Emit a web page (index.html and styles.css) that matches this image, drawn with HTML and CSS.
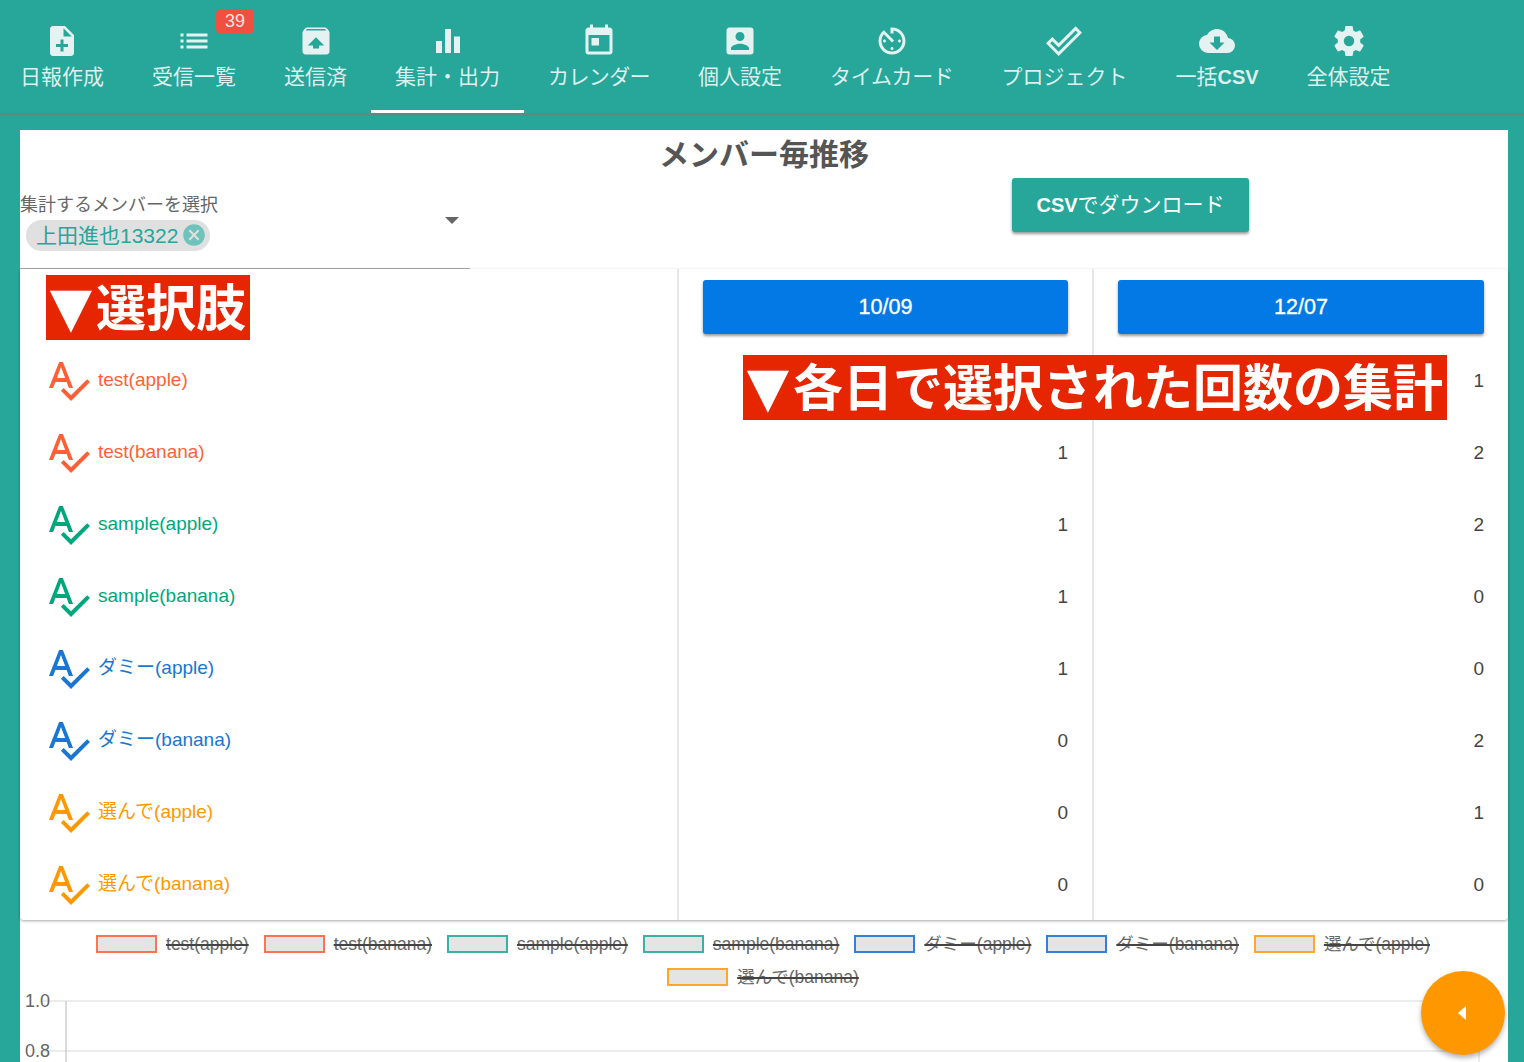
FILE: index.html
```html
<!DOCTYPE html>
<html lang="ja">
<head>
    <meta charset="UTF-8">
    <meta name="viewport" content="width=device-width, initial-scale=1.0">
    <title>メンバー毎推移</title>
    <link rel="stylesheet" href="styles.css">
</head>
<body>
    <svg class="defs" aria-hidden="true">
        <symbol id="spellcheck" viewBox="0 0 24 24"><path d="M21.59,11.59L13.5,19.68L9.83,16L8.42,17.41L13.5,22.5L23,13M6.43,11L8.5,5.5L10.57,11M12.45,16H14.54L9.43,3H7.57L2.46,16H4.55L5.67,13H11.31L12.45,16Z"/></symbol>
    </svg>

    <nav class="tabs">
        <a class="tab"><svg class="tab-icon" viewBox="0 0 24 24"><path d="M14 2H6c-1.1 0-1.99.9-1.99 2L4 20c0 1.1.89 2 1.99 2H18c1.1 0 2-.9 2-2V8l-6-6zm2 14h-3v3h-2v-3H8v-2h3v-3h2v3h3v2zm-3-7V3.5L18.5 9H13z"/></svg><span>日報作成</span></a>
        <a class="tab"><svg class="tab-icon" viewBox="0 0 24 24"><path d="M3 13h2v-2H3v2zm0 4h2v-2H3v2zm0-8h2V7H3v2zm4 4h14v-2H7v2zm0 4h14v-2H7v2zM7 7v2h14V7H7z"/></svg><span>受信一覧</span><em class="badge">39</em></a>
        <a class="tab"><svg class="tab-icon" viewBox="0 0 24 24"><path d="M20.55 5.22l-1.39-1.68C18.88 3.21 18.47 3 18 3H6c-.47 0-.88.21-1.15.55L3.46 5.22C3.17 5.57 3 6.01 3 6.5V19c0 1.1.89 2 2 2h14c1.1 0 2-.9 2-2V6.5c0-.49-.17-.93-.45-1.28zM12 9.5l5.5 5.5H14v2h-4v-2H6.5L12 9.5zM5.12 5l.82-1h12l.93 1H5.12z"/></svg><span>送信済</span></a>
        <a class="tab tab-active"><svg class="tab-icon" viewBox="0 0 24 24"><path d="M10,20H14V4H10V20M4,20H8V12H4V20M16,9V20H20V9H16Z"/></svg><span>集計・出力</span></a>
        <a class="tab tab-tight"><svg class="tab-icon" viewBox="0 0 24 24"><path fill-rule="evenodd" d="M19,3H18V1H16V3H8V1H6V3H5C3.89,3 3,3.9 3,5V19A2,2 0 0,0 5,21H19A2,2 0 0,0 21,19V5C21,3.9 20.1,3 19,3M19,19H5V8H19V19M7,10H12V15H7Z"/></svg><span>カレンダー</span></a>
        <a class="tab"><svg class="tab-icon" viewBox="0 0 24 24"><path fill-rule="evenodd" d="M3,5V19A2,2 0 0,0 5,21H19A2,2 0 0,0 21,19V5A2,2 0 0,0 19,3H5C3.89,3 3,3.9 3,5ZM6,17C6,15 10,13.9 12,13.9C14,13.9 18,15 18,17V18H6ZM15,9A3,3 0 0,1 12,12A3,3 0 0,1 9,9A3,3 0 0,1 12,6A3,3 0 0,1 15,9Z"/></svg><span>個人設定</span></a>
        <a class="tab tab-snug"><svg class="tab-icon" viewBox="0 0 24 24"><path d="M11 17c0 .55.45 1 1 1s1-.45 1-1-.45-1-1-1-1 .45-1 1zm0-14v4h2V5.08c3.39.49 6 3.39 6 6.92 0 3.87-3.13 7-7 7s-7-3.13-7-7c0-1.68.59-3.22 1.58-4.42L12 13l1.41-1.41-6.8-6.8v.02C4.42 6.45 3 9.05 3 12c0 4.97 4.02 9 9 9 4.97 0 9-4.03 9-9s-4.03-9-9-9h-1zm7 9c0-.55-.45-1-1-1s-1 .45-1 1 .45 1 1 1 1-.45 1-1zM6 12c0 .55.45 1 1 1s1-.45 1-1-.45-1-1-1-1 .45-1 1z"/></svg><span>タイムカード</span></a>
        <a class="tab"><svg class="tab-icon" viewBox="0 0 24 24"><path d="M19.78,2.2L24,6.42L8.44,22L0,13.55L4.22,9.33L8.44,13.55L19.78,2.2M19.78,5L8.44,16.36L4.22,12.19L2.81,13.55L8.44,19.17L21.19,6.42L19.78,5Z"/></svg><span>プロジェクト</span></a>
        <a class="tab"><svg class="tab-icon" viewBox="0 0 24 24"><path fill-rule="evenodd" d="M19.35,10.03C18.67,6.59 15.64,4 12,4C9.11,4 6.6,5.64 5.35,8.03C2.34,8.36 0,10.9 0,14A6,6 0 0,0 6,20H19A5,5 0 0,0 24,15C24,12.36 21.95,10.22 19.35,10.03ZM17,13L12,18L7,13H10V9H14V13Z"/></svg><span>一括<b class="latin">CSV</b></span></a>
        <a class="tab"><svg class="tab-icon" viewBox="0 0 24 24"><path d="M12,15.5A3.5,3.5 0 0,1 8.5,12A3.5,3.5 0 0,1 12,8.5A3.5,3.5 0 0,1 15.5,12A3.5,3.5 0 0,1 12,15.5M19.43,12.97C19.47,12.65 19.5,12.33 19.5,12C19.5,11.67 19.47,11.34 19.43,11L21.54,9.37C21.73,9.22 21.78,8.95 21.66,8.73L19.66,5.27C19.54,5.05 19.27,4.96 19.05,5.05L16.56,6.05C16.04,5.66 15.5,5.32 14.87,5.07L14.5,2.42C14.46,2.18 14.25,2 14,2H10C9.75,2 9.54,2.18 9.5,2.42L9.13,5.07C8.5,5.32 7.96,5.66 7.44,6.05L4.95,5.05C4.73,4.96 4.46,5.05 4.34,5.27L2.34,8.73C2.21,8.95 2.27,9.22 2.46,9.37L4.57,11C4.53,11.34 4.5,11.67 4.5,12C4.5,12.33 4.53,12.65 4.57,12.97L2.46,14.63C2.27,14.78 2.21,15.05 2.34,15.27L4.34,18.73C4.46,18.95 4.73,19.03 4.95,18.95L7.44,17.94C7.96,18.34 8.5,18.68 9.13,18.93L9.5,21.58C9.54,21.82 9.75,22 10,22H14C14.25,22 14.46,21.82 14.5,21.58L14.87,18.93C15.5,18.67 16.04,18.34 16.56,17.94L19.05,18.95C19.27,19.03 19.54,18.95 19.66,18.73L21.66,15.27C21.78,15.05 21.73,14.78 21.54,14.63L19.43,12.97Z"/></svg><span>全体設定</span></a>
    </nav>

    <main class="sheet">
        <h1 class="title">メンバー毎推移</h1>

        <div class="filter-row">
            <div class="member-select">
                <label class="member-label">集計するメンバーを選択</label>
                <span class="chip">上田進也13322
                    <svg class="chip-close" viewBox="0 0 24 24"><path d="M12,2C17.53,2 22,6.47 22,12C22,17.53 17.53,22 12,22C6.47,22 2,17.53 2,12C2,6.47 6.47,2 12,2M15.59,7L12,10.59L8.41,7L7,8.41L10.59,12L7,15.59L8.41,17L12,13.41L15.59,17L17,15.59L13.41,12L17,8.41L15.59,7Z"/></svg>
                </span>
                <i class="caret"></i>
            </div>
            <button class="csv-btn"><b class="latin">CSV</b>でダウンロード</button>
        </div>

        <section class="summary">
            <div class="summary-head"></div>
            <div class="summary-head cell-num"><button class="date-btn">10/09</button></div>
            <div class="summary-head cell-num"><button class="date-btn">12/07</button></div>

            <div class="choice c-red"><svg class="choice-icon"><use href="#spellcheck"/></svg>test(apple)</div>
            <div class="cell-num"></div>
            <div class="cell-num">1</div>

            <div class="choice c-red"><svg class="choice-icon"><use href="#spellcheck"/></svg>test(banana)</div>
            <div class="cell-num">1</div>
            <div class="cell-num">2</div>

            <div class="choice c-green"><svg class="choice-icon"><use href="#spellcheck"/></svg>sample(apple)</div>
            <div class="cell-num">1</div>
            <div class="cell-num">2</div>

            <div class="choice c-green"><svg class="choice-icon"><use href="#spellcheck"/></svg>sample(banana)</div>
            <div class="cell-num">1</div>
            <div class="cell-num">0</div>

            <div class="choice c-blue"><svg class="choice-icon"><use href="#spellcheck"/></svg>ダミー(apple)</div>
            <div class="cell-num">1</div>
            <div class="cell-num">0</div>

            <div class="choice c-blue"><svg class="choice-icon"><use href="#spellcheck"/></svg>ダミー(banana)</div>
            <div class="cell-num">0</div>
            <div class="cell-num">2</div>

            <div class="choice c-orange"><svg class="choice-icon"><use href="#spellcheck"/></svg>選んで(apple)</div>
            <div class="cell-num">0</div>
            <div class="cell-num">1</div>

            <div class="choice c-orange"><svg class="choice-icon"><use href="#spellcheck"/></svg>選んで(banana)</div>
            <div class="cell-num">0</div>
            <div class="cell-num">0</div>

            <div class="note note-choices"><span class="note-mark">▼</span>選択肢</div>
            <div class="note note-counts"><span class="note-mark">▼</span>各日で選択された回数の集計</div>
        </section>

        <ul class="legend">
            <li><i class="swatch b-red"></i><s>test(apple)</s></li>
            <li><i class="swatch b-red"></i><s>test(banana)</s></li>
            <li><i class="swatch b-green"></i><s>sample(apple)</s></li>
            <li><i class="swatch b-green"></i><s>sample(banana)</s></li>
            <li><i class="swatch b-blue"></i><s>ダミー(apple)</s></li>
            <li><i class="swatch b-blue"></i><s>ダミー(banana)</s></li>
            <li><i class="swatch b-orange"></i><s>選んで(apple)</s></li>
            <li><i class="swatch b-orange"></i><s>選んで(banana)</s></li>
        </ul>

        <svg class="chart" viewBox="0 0 1488 76">
            <line class="grid" x1="21" y1="15" x2="1460" y2="15"/>
            <line class="grid" x1="21" y1="65" x2="1460" y2="65"/>
            <line class="axis" x1="46" y1="15" x2="46" y2="76"/>
            <line class="grid" x1="1459" y1="15" x2="1459" y2="76"/>
            <text class="tick" x="30" y="21" text-anchor="end">1.0</text>
            <text class="tick" x="30" y="71" text-anchor="end">0.8</text>
        </svg>
    </main>

    <button class="fab" aria-label="開く"><i class="fab-arrow"></i></button>
</body>
</html>
```

FILE: styles.css
```css
html, body {
    height: 100%;
    overflow: hidden;
}
body {
    margin: 0;
    background-color: #27a69a;
    font-family: "Liberation Sans", "Noto Sans CJK JP", sans-serif;
    color: #555;
}
.defs {
    display: none;
}
.latin {
    font-size: 20px;
}

/* top tabs */
.tabs {
    display: flex;
    height: 113px;
    margin-left: -4px;
    border-bottom: 3px solid #5f8a84;
}
.tab {
    position: relative;
    display: flex;
    flex-direction: column;
    align-items: center;
    box-sizing: border-box;
    height: 113px;
    padding: 23px 24px 0;
    color: rgba(255, 255, 255, 0.85);
    font-size: 21px;
    line-height: 36px;
    white-space: nowrap;
}
.tab-icon {
    width: 36px;
    height: 36px;
    fill: #e4f3f1;
}
.tab-active {
    border-bottom: 3px solid #fff;
}
.tab-tight span {
    letter-spacing: -0.6px;
}
.tab-snug span {
    letter-spacing: -0.35px;
}
.badge {
    position: absolute;
    top: 9px;
    right: 6px;
    width: 38px;
    height: 25px;
    border-radius: 5px;
    background-color: #ef5040;
    color: #f5e4e0;
    font-size: 18px;
    font-style: normal;
    line-height: 25px;
    text-align: center;
}

/* main sheet */
.sheet {
    margin: 14px 16px 0 20px;
    background-color: #fff;
}
.title {
    margin: 0;
    height: 48px;
    color: #555;
    font-size: 30px;
    line-height: 50px;
    text-align: center;
}
.filter-row {
    display: flex;
    align-items: flex-start;
    height: 91px;
}
.member-select {
    position: relative;
    box-sizing: border-box;
    width: 450px;
    height: 91px;
    padding-top: 14px;
    border-bottom: 1px solid #a8a8a8;
}
.member-label {
    display: block;
    color: #666;
    font-size: 18px;
    line-height: 26px;
}
.chip {
    display: inline-flex;
    align-items: center;
    height: 31px;
    margin: 2px 0 0 6px;
    padding: 0 3px 0 10px;
    border-radius: 16px;
    background-color: #e0e0e0;
    color: #27a69a;
    font-size: 21px;
    line-height: 28px;
    white-space: nowrap;
}
.chip-close {
    width: 26px;
    height: 26px;
    margin: -2px 0 0 3px;
    fill: #6fc3ba;
}
.caret {
    position: absolute;
    top: 39px;
    left: 425px;
    border-top: 7px solid #666;
    border-left: 7px solid transparent;
    border-right: 7px solid transparent;
}
.csv-btn {
    width: 237px;
    height: 54px;
    margin-left: 542px;
    border: 0;
    border-radius: 3px;
    background-color: #27a69a;
    color: #fff;
    font: inherit;
    font-size: 21px;
    line-height: 28px;
    box-shadow: 0 2px 3px rgba(0, 0, 0, 0.4);
}

/* table of choices */
.summary {
    position: relative;
    display: grid;
    grid-template-columns: 657px 415px 416px;
    grid-template-rows: 75px repeat(8, 72px);
    border-radius: 4px;
    box-shadow: 0 1px 3px rgba(0, 0, 0, 0.35);
}
.summary-head {
    padding-top: 11px;
}
.cell-num {
    box-sizing: border-box;
    border-left: 2px solid #e6e6e6;
    padding: 1px 24px 0;
    color: #444;
    font-size: 19px;
    line-height: 72px;
    text-align: right;
}
.summary-head.cell-num {
    padding-top: 11px;
    line-height: normal;
}
.date-btn {
    display: block;
    width: 100%;
    height: 54px;
    border: 0;
    border-radius: 3px;
    background-color: #0279e4;
    color: #fff;
    font: inherit;
    font-size: 21.5px;
    -webkit-text-stroke: 0.35px #fff;
    box-shadow: 0 2px 3px rgba(0, 0, 0, 0.4);
}
.choice {
    display: flex;
    align-items: center;
    gap: 6px;
    padding-left: 24px;
    font-size: 19px;
    line-height: 26px;
}
.choice-icon {
    width: 48px;
    height: 48px;
    fill: currentColor;
}
.c-red { color: #ff5f35; }
.c-green { color: #00a77d; }
.c-blue { color: #1976d2; }
.c-orange { color: #ff9800; }

.note {
    position: absolute;
    box-sizing: border-box;
    height: 65px;
    background-color: #e52600;
    color: #fff;
    font-size: 50px;
    font-weight: bold;
    line-height: 68px;
    white-space: nowrap;
}
.note-mark {
    display: inline-block;
    width: 50px;
    font-family: "DejaVu Sans", sans-serif;
    font-size: 55px;
    font-weight: normal;
    line-height: 50px;
    text-align: center;
}
.note-choices {
    top: 6px;
    left: 26px;
    width: 204px;
}
.note-counts {
    top: 86px;
    left: 723px;
    width: 704px;
}

/* chart */
.legend {
    display: flex;
    flex-wrap: wrap;
    justify-content: center;
    gap: 15px;
    margin: 0;
    padding: 15px 2px 0 0;
    list-style: none;
    color: #666;
    font-size: 17.5px;
    line-height: 18px;
}
.legend li {
    display: flex;
    gap: 9px;
}
.legend s {
    text-decoration-color: #444;
    text-decoration-thickness: 2px;
}
.swatch {
    box-sizing: border-box;
    width: 61px;
    height: 18px;
    border: 2px solid;
    background-color: #e4e4e4;
}
.b-red { border-color: #ff7350; }
.b-green { border-color: #3bb0a4; }
.b-blue { border-color: #2f83d6; }
.b-orange { border-color: #ffa726; }

.chart {
    display: block;
    width: 1488px;
    height: 76px;
}
.grid {
    stroke: #e6e6e6;
    stroke-width: 1.5;
}
.axis {
    stroke: #cfcfcf;
    stroke-width: 1.5;
}
.tick {
    fill: #666;
    font-size: 18px;
}

/* floating button */
.fab {
    position: fixed;
    top: 971px;
    left: 1421px;
    width: 84px;
    height: 84px;
    padding: 0;
    border: 0;
    border-radius: 50%;
    background-color: #ff9800;
    box-shadow: 0 3px 5px rgba(0, 0, 0, 0.3);
}
.fab-arrow {
    display: block;
    width: 0;
    margin-left: 37px;
    border-top: 7px solid transparent;
    border-bottom: 7px solid transparent;
    border-right: 8px solid #fff;
}
```
